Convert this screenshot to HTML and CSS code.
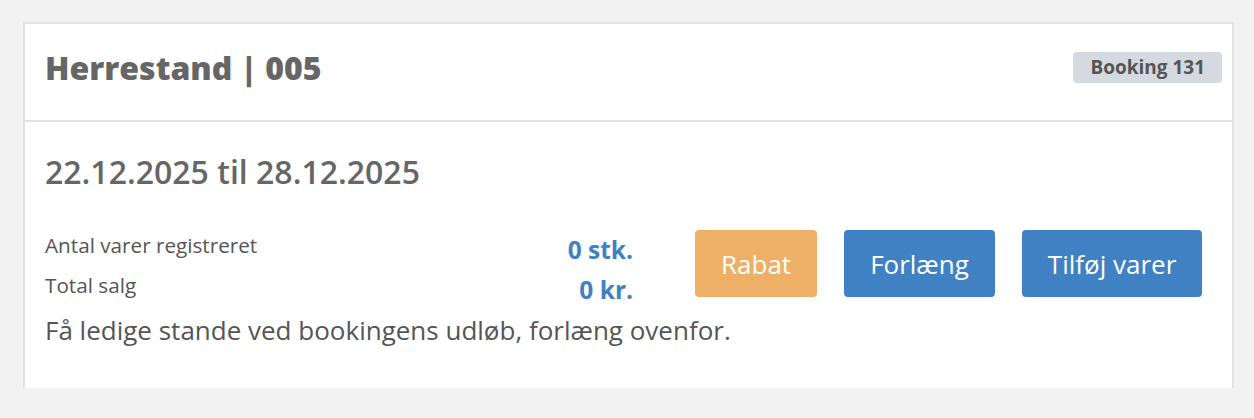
FILE: index.html
```html
<!DOCTYPE html>
<html lang="da">
<head>
  <meta charset="UTF-8">
  <title>Herrestand | 005</title>
  <link rel="stylesheet" href="styles.css">
</head>
<body>
  <div class="booking-card">
    <div class="card-header">
      <h2 class="stand-title">Herrestand | 005</h2>
      <span class="badge">Booking 131</span>
    </div>

    <div class="card-body">
      <h3 class="period">22.12.2025 til 28.12.2025</h3>

      <div class="summary">
        <div class="stats">
          <div class="stat-row">
            <span class="stat-label">Antal varer registreret</span>
            <span class="stat-value">0 stk.</span>
          </div>
          <div class="stat-row">
            <span class="stat-label">Total salg</span>
            <span class="stat-value">0 kr.</span>
          </div>
        </div>

        <div class="actions">
          <button class="btn btn-warning">Rabat</button>
          <button class="btn btn-primary">Forlæng</button>
          <button class="btn btn-primary">Tilføj varer</button>
        </div>
      </div>

      <p class="notice">Få ledige stande ved bookingens udløb, forlæng ovenfor.</p>
    </div>
  </div>
</body>
</html>
```

FILE: styles.css
```css
:root {
  --bg: #f2f2f2;
  --card: #ffffff;
  --border: #e2e2e2;
  --text: #555555;
  --heading: #666666;
  --blue: #3f81c3;
  --orange: #edb066;
  --badge: #d4dadf;
}

* {
  margin: 0;
  padding: 0;
  box-sizing: border-box;
  font-family: "Open Sans", "Liberation Sans", Arial, sans-serif;
}

body {
  background-color: var(--bg);
  color: var(--text);
  padding: 22px 20px 0 23px;
}

.booking-card {
  background-color: var(--card);
  border: 2px solid var(--border);
  border-bottom: none;
  height: 366px;
}

.card-header {
  display: flex;
  align-items: center;
  justify-content: space-between;
  height: 98px;
  padding: 0 10px 0 20px;
  border-bottom: 2px solid var(--border);
}

.stand-title {
  font-size: 32px;
  font-weight: 800;
  color: var(--heading);
  line-height: 40px;
  margin-top: -9px;
}

.badge {
  background-color: var(--badge);
  color: var(--text);
  font-size: 19px;
  font-weight: 700;
  line-height: 25px;
  padding: 3px 17px;
  border-radius: 4px;
  margin-top: -9px;
}

.card-body {
  padding: 30px 20px 0;
}

.period {
  font-size: 32px;
  font-weight: 600;
  color: var(--heading);
  line-height: 40px;
}

.summary {
  display: flex;
  align-items: flex-start;
  margin-top: 34px;
}

.stats {
  width: 588px;
  display: flex;
  flex-direction: column;
  gap: 2px;
}

.stat-row {
  display: flex;
  justify-content: space-between;
  align-items: center;
  height: 38px;
}

.stat-label {
  font-size: 20.7px;
  line-height: 26px;
}

.stat-value {
  font-size: 24.5px;
  font-weight: 700;
  color: var(--blue);
  padding-top: 8px;
}

.actions {
  display: flex;
  gap: 27px;
  margin-left: 62px;
  margin-top: 4px;
}

.btn {
  height: 67px;
  padding: 0 26px;
  border: none;
  border-radius: 4px;
  color: #ffffff;
  font-size: 26px;
  font-weight: 400;
}

.btn-warning {
  background-color: var(--orange);
}

.btn-primary {
  background-color: var(--blue);
}

.notice {
  font-size: 26px;
  line-height: 34px;
  margin-top: 9px;
}
```
